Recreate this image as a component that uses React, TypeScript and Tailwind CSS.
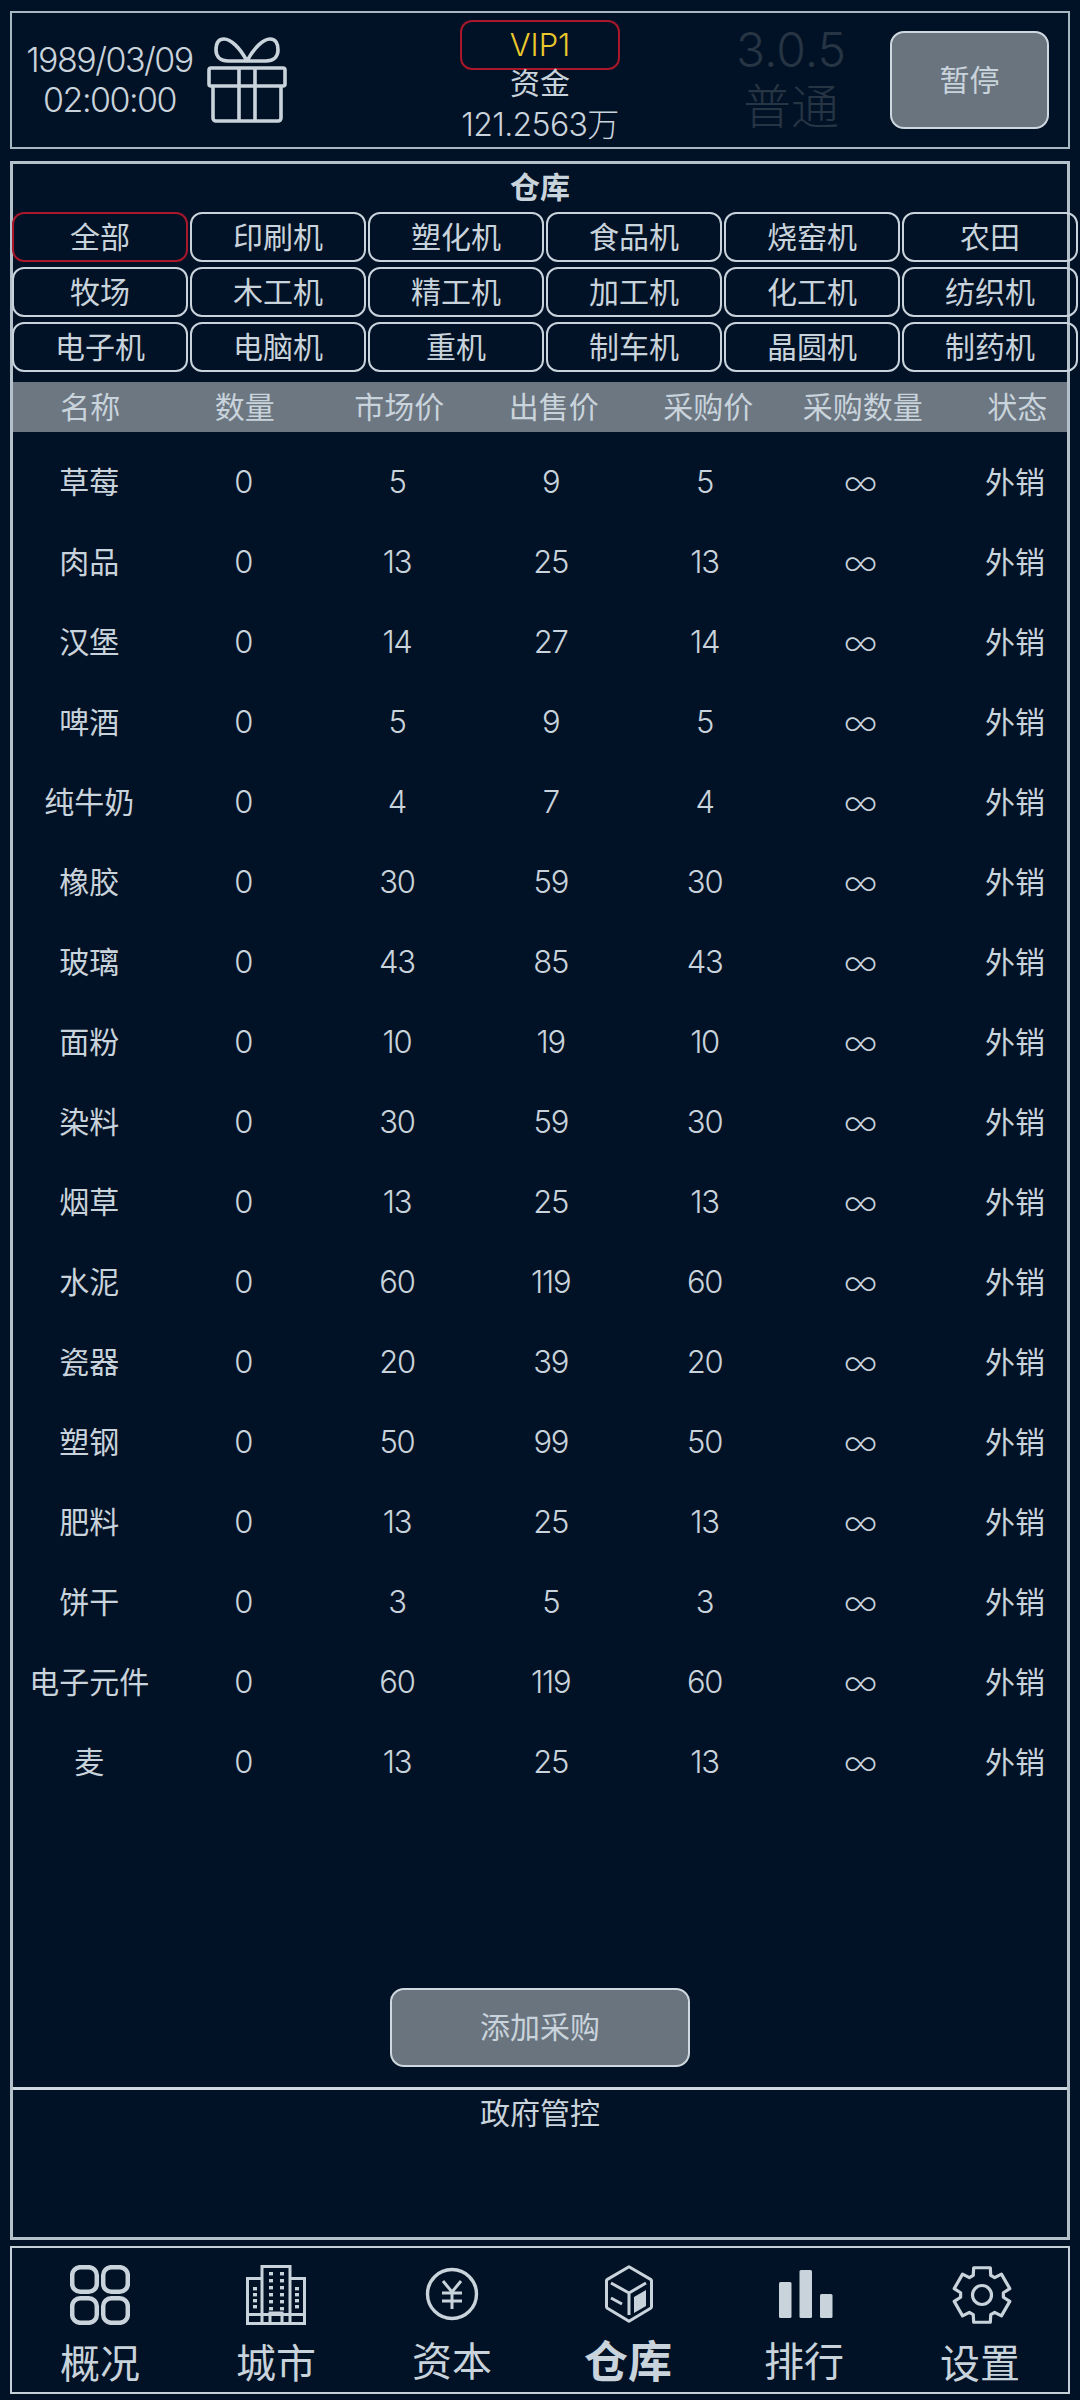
const FONT = "font-['Inter','Noto_Sans_CJK_SC',sans-serif]";

const tabs = [
  ['全部', '印刷机', '塑化机', '食品机', '烧窑机', '农田'],
  ['牧场', '木工机', '精工机', '加工机', '化工机', '纺织机'],
  ['电子机', '电脑机', '重机', '制车机', '晶圆机', '制药机'],
];
const headers = ['名称', '数量', '市场价', '出售价', '采购价', '采购数量', '状态'];
const rows: [string, number, number, number][] = [
  ['草莓', 0, 5, 9], ['肉品', 0, 13, 25], ['汉堡', 0, 14, 27], ['啤酒', 0, 5, 9],
  ['纯牛奶', 0, 4, 7], ['橡胶', 0, 30, 59], ['玻璃', 0, 43, 85], ['面粉', 0, 10, 19],
  ['染料', 0, 30, 59], ['烟草', 0, 13, 25], ['水泥', 0, 60, 119], ['瓷器', 0, 20, 39],
  ['塑钢', 0, 50, 99], ['肥料', 0, 13, 25], ['饼干', 0, 3, 5], ['电子元件', 0, 60, 119], ['麦', 0, 13, 25],
];

function Gift() {
  return (
    <svg width="80" height="86" viewBox="0 0 80 86" fill="none" stroke="#c9d3db" strokeWidth="3.6" strokeLinejoin="round">
      <path d="M40 24C33 11 24 2 17 2 11 2 9 7 9 13c0 7 5 11 12 11h38c7 0 12-4 12-11 0-6-2-11-8-11-7 0-16 9-23 22Z" />
      <rect x="2" y="31" width="76" height="18" rx="2" />
      <path d="M6 49v32a3 3 0 0 0 3 3h62a3 3 0 0 0 3-3V49" />
      <path d="M32 31v53M48 31v53" />
    </svg>
  );
}

function IconGrid() {
  return (
    <svg width="60" height="60" viewBox="0 0 60 60" fill="none" stroke="#c9d3db" strokeWidth="4.5">
      <rect x="2.2" y="2.2" width="24.6" height="24.6" rx="8" />
      <rect x="33.2" y="2.2" width="24.6" height="24.6" rx="8" />
      <rect x="2.2" y="33.2" width="24.6" height="24.6" rx="8" />
      <rect x="33.2" y="33.2" width="24.6" height="24.6" rx="8" />
    </svg>
  );
}

function IconCity() {
  const tower: [number, number][] = [];
  [7, 14, 21, 28, 35, 42].forEach((y) => [23, 34].forEach((x) => tower.push([x, y])));
  const left: [number, number][] = [[7, 22], [7, 28], [7, 34], [7, 40]];
  const right: [number, number][] = [[49, 22], [49, 28], [49, 34], [49, 40]];
  return (
    <svg width="60" height="60" viewBox="0 0 60 60" fill="none" stroke="#c9d3db" strokeWidth="3">
      <path d="M16 13.5H1.5v45h57v-45H44" />
      <path d="M16 58V1.5h28V58" />
      <path d="M2 49.5h14M44 49.5h14M16 49.5h28" />
      <path d="M24 58V48h12v10" />
      {[...tower, ...left, ...right].map(([x, y], i) => (
        <rect key={i} x={x} y={y} width="4" height="3.4" fill="#c9d3db" stroke="none" />
      ))}
    </svg>
  );
}

function IconYen() {
  return (
    <svg width="54" height="54" viewBox="0 0 54 54" fill="none" stroke="#c9d3db" strokeWidth="3.4">
      <circle cx="27" cy="27" r="24.5" />
      <path d="M18 14l9 11 9-11M17 26h20M17 34h20M27 25v17" strokeWidth="3" />
    </svg>
  );
}

function IconCube() {
  return (
    <svg className="ml-[2px]" width="48" height="58" viewBox="0 0 48 58" fill="none" stroke="#c9d3db" strokeWidth="3" strokeLinejoin="round">
      <path d="M24 1.8 46 14.6a1.5 1.5 0 0 1 .5 1V42a1.5 1.5 0 0 1-.5 1L24 56.2 2 43a1.5 1.5 0 0 1-.5-1V15.6a1.5 1.5 0 0 1 .5-1Z" />
      <path d="M6 18 24 28 41 18M24 28v22" />
      <path d="M6 33l11 6" />
      <path d="M29 32 41 25V41L29 48Z" fill="#c9d3db" stroke="none" />
    </svg>
  );
}

function IconBars() {
  return (
    <svg className="ml-[3px]" width="54" height="48" viewBox="0 0 54 48" fill="#c9d3db">
      <rect x="0" y="12" width="12.5" height="36" rx="1.5" />
      <rect x="20.5" y="0" width="12.5" height="48" rx="1.5" />
      <rect x="41" y="24" width="12.5" height="24" rx="1.5" />
    </svg>
  );
}

function IconGear() {
  const cx = 30, cy = 30;
  const pt = (r: number, deg: number) => {
    const a = (deg * Math.PI) / 180;
    return `${(cx + r * Math.cos(a)).toFixed(2)} ${(cy + r * Math.sin(a)).toFixed(2)}`;
  };
  let d = '';
  for (let i = 0; i < 6; i++) {
    const c = -90 + i * 60;
    const seg = [pt(21.5, c - 24), pt(28.5, c - 17), pt(28.5, c + 17), pt(21.5, c + 24)];
    d += (i === 0 ? 'M' : 'L') + seg.join('L');
  }
  d += 'Z';
  return (
    <svg className="ml-[3px]" width="60" height="60" viewBox="0 0 60 60" fill="none" stroke="#c9d3db" strokeWidth="3.2" strokeLinejoin="round">
      <path d={d} />
      <circle cx={cx} cy={cy} r="9.5" />
    </svg>
  );
}

function NavItem({ icon, label, active }: { icon: React.ReactNode; label: string; active?: boolean }) {
  return (
    <div className="flex-1 flex flex-col items-center">
      <div className="h-[60px] mt-[17px] flex items-center justify-center">{icon}</div>
      <div className={active ? 'text-[44px] leading-[60px] font-bold mt-[9px]' : 'text-[40px] leading-[60px] mt-[9px]'}>
        {label}
      </div>
    </div>
  );
}

export default function App() {
  return (
    <div className={`${FONT} w-[1080px] h-[2400px] bg-[#011226] text-[#c9d3db] overflow-hidden flex flex-col pt-[11px] px-[10px]`}>
      <header className="h-[138px] border-2 border-[#a9b7c2] flex items-start shrink-0">
        <div className="w-[167px] ml-[14px] mt-[27px] text-center text-[34px] leading-[40px] font-light tracking-[-0.045em] whitespace-nowrap shrink-0">
          <div>1989/03/09</div>
          <div>02:00:00</div>
        </div>
        <div className="ml-[14px] mt-[24px] shrink-0">
          <Gift />
        </div>
        <div className="w-[160px] ml-[173px] mt-[7px] flex flex-col items-center shrink-0">
          <div className="w-[160px] h-[50px] border-2 border-[#a8182a] rounded-[12px] flex items-center justify-center text-[31px] font-light text-[#ecc92b]">
            VIP1
          </div>
          <div className="text-[30px] leading-[34px] -mt-[4px]">资金</div>
          <div className="text-[32px] leading-[40px] mt-[5px] font-light tracking-[-0.02em] whitespace-nowrap">121.2563万</div>
        </div>
        <div className="w-[120px] ml-[111px] mt-[12px] flex flex-col items-center text-[#263443] shrink-0">
          <div className="text-[48px] leading-[50px] font-light whitespace-nowrap">3.0.5</div>
          <div className="text-[48px] leading-[56px] mt-[4px] font-light">普通</div>
        </div>
        <div className="w-[159px] h-[98px] ml-[39px] mt-[18px] bg-[#69747f] border-2 border-[#cfd8de] rounded-[14px] flex items-center justify-center text-[30px] shrink-0">
          暂停
        </div>
      </header>

      <main className="h-[2079px] mt-[12px] border-[3px] border-[#b4c0ca] flex flex-col shrink-0">
        <div className="h-[46px] leading-[46px] text-center text-[30px] font-bold">仓库</div>
        <div className="mt-[2px] -ml-[1px] flex flex-col gap-[5px]">
          {tabs.map((row, i) => (
            <div key={i} className="flex gap-[2px]">
              {row.map((t, j) => (
                <div
                  key={t}
                  className={`w-[176px] h-[50px] shrink-0 rounded-[12px] border-2 flex items-center justify-center text-[30px] ${
                    i === 0 && j === 0 ? 'border-[#a8182a]' : 'border-[#c9d3db]'
                  }`}
                >
                  {t}
                </div>
              ))}
            </div>
          ))}
        </div>
        <div className="mt-[10px] h-[50px] bg-[#6c7782] flex overflow-hidden shrink-0">
          {headers.map((h) => (
            <div key={h} className="w-[154.5px] shrink-0 text-center text-[30px] leading-[50px]">
              {h}
            </div>
          ))}
        </div>
        <div className="mt-[10px] flex-1 overflow-hidden -ml-[1px]">
          {rows.map(([name, qty, market, sell]) => (
            <div key={name} className="h-[80px] flex items-center text-[30px]">
              <div className="w-[154.3px] shrink-0 text-center">{name}</div>
              {[qty, market, sell, market].map((c, k) => (
                <div key={k} className="w-[153.8px] shrink-0 text-center text-[31px] font-light tracking-[-0.04em]">
                  {c}
                </div>
              ))}
              <div className="w-[154.3px] ml-[2px] shrink-0 text-center text-[38px] leading-[40px] font-extralight">∞</div>
              <div className="w-[154.3px] shrink-0 text-center">外销</div>
            </div>
          ))}
        </div>
        <div className="flex justify-center">
          <div className="w-[300px] h-[79px] bg-[#69747f] border-2 border-[#cfd8de] rounded-[14px] flex items-center justify-center text-[30px]">
            添加采购
          </div>
        </div>
        <div className="h-[150px] mt-[20px] border-t-[3px] border-[#cfd8de] shrink-0">
          <div className="text-center text-[30px] leading-[46px]">政府管控</div>
        </div>
      </main>

      <nav className="h-[148px] mt-[6px] border-2 border-[#c4cfd8] flex shrink-0">
        <NavItem icon={<IconGrid />} label="概况" />
        <NavItem icon={<IconCity />} label="城市" />
        <NavItem icon={<IconYen />} label="资本" />
        <NavItem icon={<IconCube />} label="仓库" active />
        <NavItem icon={<IconBars />} label="排行" />
        <NavItem icon={<IconGear />} label="设置" />
      </nav>
    </div>
  );
}
